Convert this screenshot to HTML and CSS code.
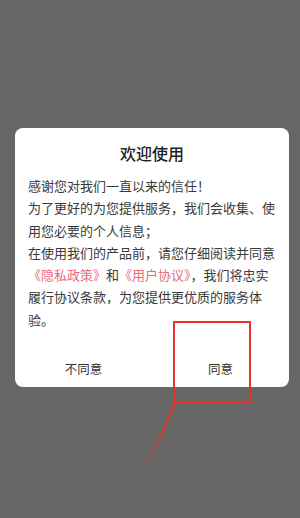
FILE: index.html
```html
<!DOCTYPE html>
<html lang="zh-CN">
<head>
    <meta charset="UTF-8">
    <meta name="viewport" content="width=device-width, initial-scale=1.0">
    <title>欢迎使用</title>
    <link rel="stylesheet" href="styles.css">
</head>
<body>
    <div class="mask">
        <div class="dialog">
            <h2 class="dialog-title">欢迎使用</h2>
            <div class="dialog-body">
                <p>感谢您对我们一直以来的信任！</p>
                <p>为了更好的为您提供服务，我们会收集、使用您必要的个人信息；</p>
                <p>在使用我们的产品前，请您仔细阅读并同意<a class="link" href="#">《隐私政策》</a>和<a class="link" href="#">《用户协议》</a>，我们将忠实履行协议条款，为您提供更优质的服务体验。</p>
            </div>
            <div class="dialog-footer">
                <div class="btn">不同意</div>
                <div class="btn">同意</div>
            </div>
        </div>

        <!-- 标注 -->
        <div class="mark-box"></div>
        <svg class="mark-arrow" width="40" height="70" viewBox="0 0 40 70">
            <defs>
                <linearGradient id="fade" x1="1" y1="0" x2="0" y2="1">
                    <stop offset="0" stop-color="#e8322c"/>
                    <stop offset="1" stop-color="#e8322c" stop-opacity="0.35"/>
                </linearGradient>
            </defs>
            <path d="M32 2 C27 12 22 24 14 42 L3 62" fill="none" stroke="url(#fade)" stroke-width="2.4" stroke-linecap="round"/>
        </svg>
    </div>
</body>
</html>
```

FILE: styles.css
```css
* {
    margin: 0;
    padding: 0;
    box-sizing: border-box;
}

html, body {
    width: 100%;
    height: 100%;
    overflow: hidden;
}

body {
    font-family: "Noto Sans CJK SC", "Noto Sans", sans-serif;
    background: #666666;
    color: #333;
}

.mask {
    position: relative;
    width: 100%;
    height: 100%;
    padding: 128px 11px 0 15px;
}

.dialog {
    width: 274px;
    height: 259px;
    background: #fff;
    border-radius: 8px;
    display: flex;
    flex-direction: column;
}

.dialog-title {
    font-size: 16px;
    font-weight: 500;
    line-height: 22px;
    color: #222;
    text-align: center;
    margin-top: 14px;
}

.dialog-body {
    margin-top: 11px;
    padding: 0 13px;
    font-size: 13px;
    line-height: 22.3px;
    color: #3a3a3a;
}

.link {
    color: #ea6a7e;
    text-decoration: none;
}

.dialog-footer {
    margin-top: auto;
    height: 38px;
    display: flex;
}

.btn {
    flex: 1;
    display: flex;
    align-items: center;
    justify-content: center;
    font-size: 12.5px;
    color: #333;
}

.mark-box {
    position: absolute;
    left: 173px;
    top: 321px;
    width: 78px;
    height: 83px;
    border: 2px solid #e8322c;
}

.mark-arrow {
    position: absolute;
    left: 144px;
    top: 400px;
}
```
